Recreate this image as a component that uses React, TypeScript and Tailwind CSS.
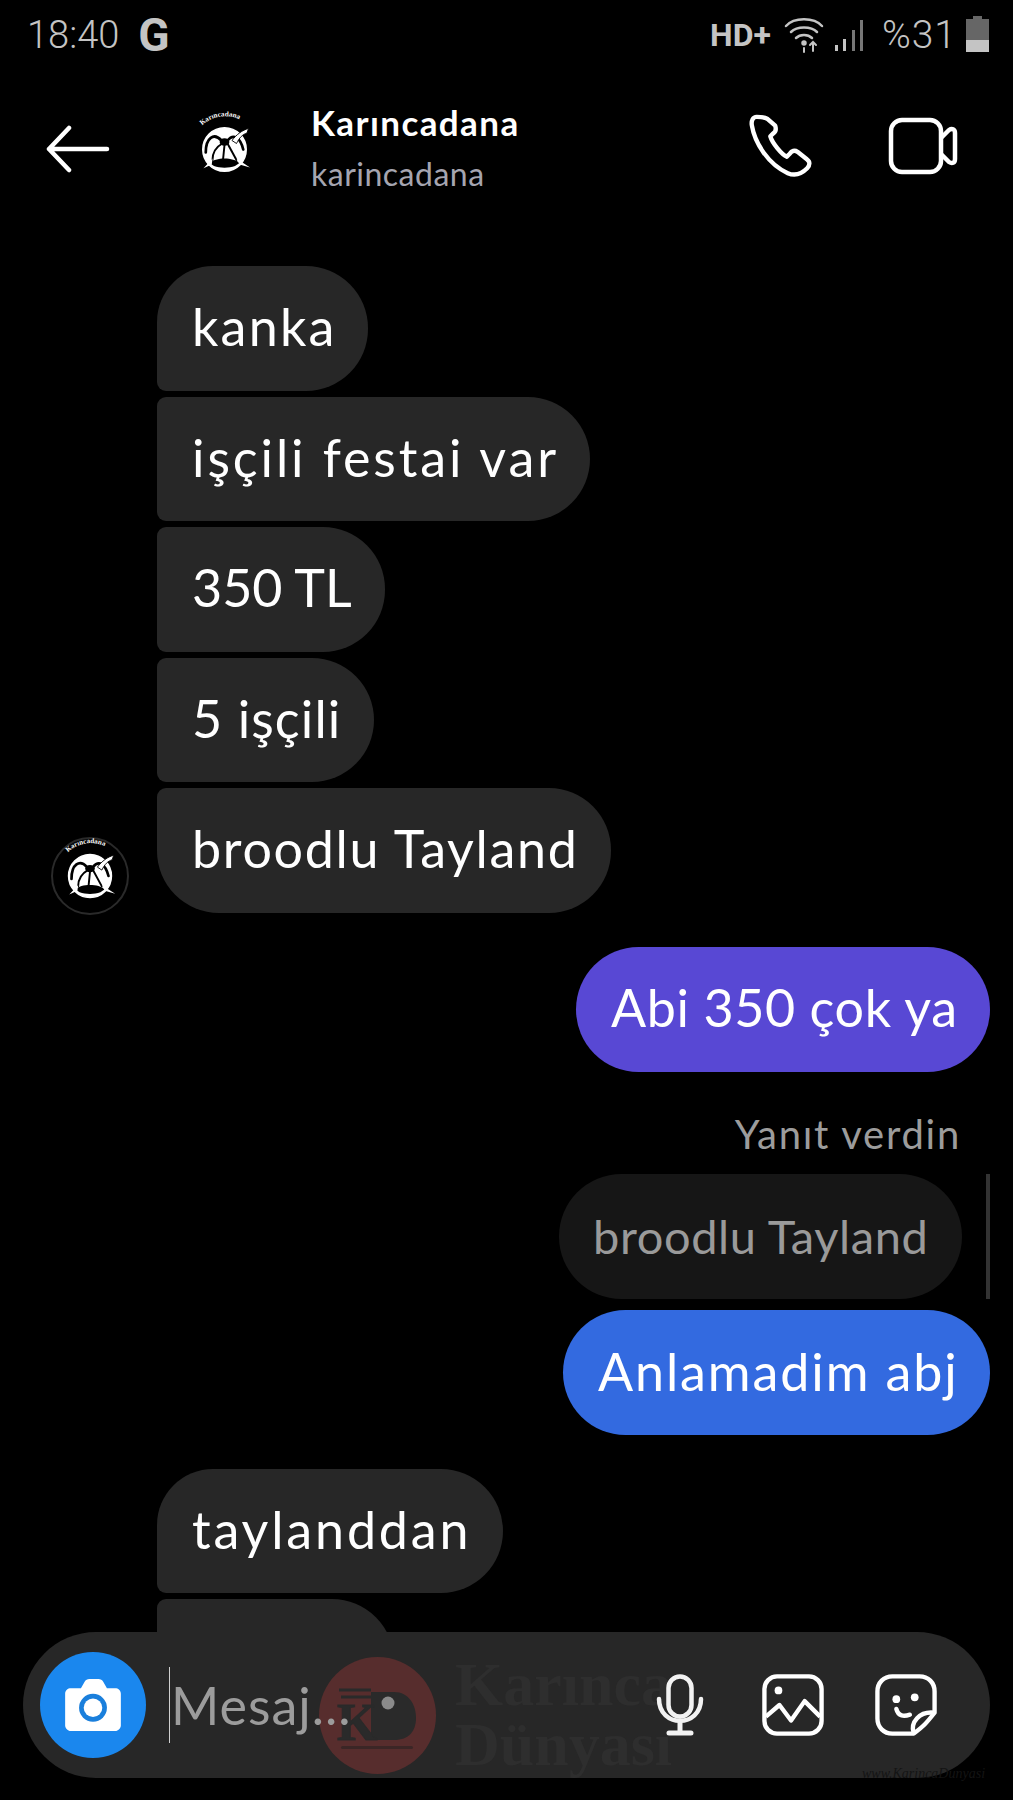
const hand = "font-['Lato','Noto_Sans',sans-serif]";

function Logo({ size, id }: { size: number; id: string }) {
  return (
    <svg width={size} height={size} viewBox="-4 10 100 100" className="overflow-visible shrink-0">
      <path id={id} d="M14 30 A45 45 0 0 1 80 30" fill="none" />
      <text fontSize="9.5" fill="#fff" fontFamily="Liberation Serif, serif" fontWeight="700">
        <textPath href={`#${id}`} startOffset="4%">Karıncadana</textPath>
      </text>
      <circle cx="46" cy="60" r="29" fill="#fff" stroke="#fff" strokeWidth="2" />
      {/* ground */}
      <path d="M26 78 C34 70 58 70 66 78 L60 82 C52 85 40 85 32 82Z" fill="#000" />
      {/* ant */}
      <g fill="none" stroke="#000" strokeWidth="3.6" strokeLinecap="round">
        <path d="M42 48 C32 37 21 44 21 64" />
        <path d="M50 48 C58 38 67 44 71 60" />
        <path d="M43 52 C36 56 30 62 30 74" strokeWidth="2.6" />
        <path d="M46 54 L44 74" strokeWidth="2.6" />
        <path d="M50 52 L62 74" strokeWidth="2.6" />
      </g>
      <ellipse cx="46" cy="50" rx="6.5" ry="5" fill="#000" />
      <path d="M56 48 C62 40 70 34 78 32 L76 38 C70 40 66 44 62 52Z" fill="#fff" stroke="#000" strokeWidth="1.2" />
      <path d="M62 72 L80 84 L66 80Z M30 72 L18 85 L29 80Z" fill="#fff" />
    </svg>
  );
}

function BackArrow() {
  return (
    <svg width="66" height="48" viewBox="0 0 66 48" fill="none" stroke="#fff" strokeWidth="4.5" strokeLinecap="round" strokeLinejoin="round">
      <path d="M62 24 H4 M24 3 L4 24 L24 45" />
    </svg>
  );
}

function PhoneIcon() {
  return (
    <svg width="64" height="64" viewBox="0 0 66 66" fill="none" stroke="#fff" strokeWidth="4.5" strokeLinejoin="round">
      <path d="M8 3 C4 3 2 7 3 12 C6 30 20 52 40 61 C47 64 54 62 60 56 C63 53 63 49 60 47 L50 39 C47 37 44 38 42 41 L39 44 C34 42 24 30 22 23 L25 20 C28 18 28 15 27 12 L19 5 C16 3 12 3 8 3Z" />
    </svg>
  );
}

function VideoIcon() {
  return (
    <svg width="70" height="58" viewBox="0 0 70 58" fill="none" stroke="#fff" strokeWidth="4.5" strokeLinejoin="round">
      <rect x="3" y="3" width="50" height="52" rx="11" />
      <path d="M53 21 L61 13 C64 11 67 12 67 16 V42 C67 46 64 47 61 45 L53 37" />
    </svg>
  );
}

function StatusIcons() {
  return (
    <div className="flex items-center">
      <span className="font-['Roboto',sans-serif] font-bold text-[32px] text-[#c4c4c4] leading-none mr-[13px]">HD+</span>
      <svg width="44" height="36" viewBox="0 0 44 36" fill="none" stroke="#c4c4c4" strokeWidth="2.5" strokeLinecap="round">
        <path d="M2 9 C10 0 30 0 38 9" />
        <path d="M7 15 C13 9 27 9 33 15" />
        <path d="M12 21 C16 17 24 17 28 21" />
        <circle cx="20" cy="26" r="1.5" fill="#c4c4c4" />
        <path d="M20 31 V35 M29 25 V34 M26 28 L29 25 L32 28" strokeWidth="2" />
      </svg>
      <svg width="30" height="36" viewBox="0 0 30 36" className="ml-[6px]" fill="#c4c4c4">
        <rect x="1" y="28" width="3" height="6" />
        <rect x="9" y="22" width="3" height="12" />
        <rect x="18" y="13" width="3" height="21" fill="#777" />
        <rect x="26" y="3" width="3" height="31" fill="#777" />
      </svg>
      <span className="font-['Roboto',sans-serif] font-light text-[39px] text-[#c4c4c4] leading-none ml-[18px] tracking-[1px]">%31</span>
      <svg width="25" height="38" viewBox="0 0 25 38" className="ml-[8px]">
        <rect x="8" y="0" width="9" height="4" fill="#666" />
        <rect x="1" y="3" width="23" height="21" fill="#666" />
        <rect x="1" y="24" width="23" height="12" fill="#c4c4c4" />
      </svg>
    </div>
  );
}

function LeftBubble({ text, width, shape }: { text: string; width: string; shape: string }) {
  return (
    <div className={`h-[124.5px] bg-[#272727] flex items-center pl-[35px] pb-[4px] rounded-r-[62px] text-white text-[52px] whitespace-nowrap ${hand} ${width} ${shape}`}>
      {text}
    </div>
  );
}

function CameraIcon() {
  return (
    <svg width="56" height="52" viewBox="0 0 60 56">
      <path d="M6 10 H17 L21 3 C22 1 24 0 26 0 H36 C38 0 40 1 41 3 L45 10 H54 C57 10 60 12 60 16 V50 C60 53 57 56 54 56 H6 C3 56 0 53 0 50 V16 C0 12 3 10 6 10Z" fill="#fff" />
      <circle cx="30" cy="31" r="15" fill="#1a7fdc" />
      <circle cx="30" cy="31" r="10" fill="#fff" />
    </svg>
  );
}

function MicIcon() {
  return (
    <svg width="48" height="62" viewBox="0 0 48 62" fill="none" stroke="#f2f2f2" strokeWidth="4.5" strokeLinecap="round">
      <rect x="12.5" y="2.5" width="23" height="40" rx="11.5" />
      <path d="M3 25 C3 54 45 54 45 25" />
      <path d="M24 47 V58 M13 59 H35" strokeWidth="5" />
    </svg>
  );
}

function ImageIcon() {
  return (
    <svg width="62" height="62" viewBox="0 0 64 64" fill="none" stroke="#fff" strokeWidth="4.5" strokeLinejoin="round">
      <rect x="2.5" y="2.5" width="59" height="59" rx="13" />
      <circle cx="17" cy="17" r="4" fill="#fff" stroke="none" />
      <path d="M4 44 L18 32 L30 48 L44 28 L60 44" />
    </svg>
  );
}

function StickerIcon() {
  return (
    <svg width="62" height="62" viewBox="0 0 64 64" fill="none" stroke="#fff" strokeWidth="4.5" strokeLinejoin="round">
      <path d="M40 61.5 H18 C9 61.5 2.5 55 2.5 46 V18 C2.5 9 9 2.5 18 2.5 H46 C55 2.5 61.5 9 61.5 18 V40 C52 52 50 54 40 61.5Z" />
      <path d="M40 61.5 C36 50 46 38 61.5 40" />
      <path d="M22 36 C24 44 30 44 36 42" strokeLinecap="round" />
      <circle cx="22" cy="26" r="4" fill="#fff" stroke="none" />
      <circle cx="41" cy="24" r="4" fill="#fff" stroke="none" />
    </svg>
  );
}

function WatermarkLogo() {
  return (
    <svg width="117" height="117" viewBox="0 0 117 117">
      <circle cx="58.5" cy="58.5" r="58.5" fill="#572d2d" />
      <path d="M52 35 H75 C90 35 97 48 97 61 C97 74 90 83 75 83 H52Z" fill="#2a2a2a" />
      <text x="18" y="83" fontSize="52" fontWeight="700" fill="#2a2a2a" stroke="#2a2a2a" strokeWidth="1" fontFamily="Liberation Serif, serif">K</text>
      <path d="M20 33 H52 M22 40 H52" stroke="#2a2a2a" strokeWidth="3" />
      <circle cx="69" cy="46" r="6.5" fill="#8a8a8a" />
      <rect x="22" y="89" width="72" height="3" rx="1.5" fill="#3b2626" />
    </svg>
  );
}

export default function App() {
  return (
    <div className="relative h-[1800px] bg-black overflow-hidden">
      {/* status bar */}
      <div className="h-[70px] flex items-center justify-between pl-[27px] pr-[23px]">
        <div className="flex items-center gap-[19px]">
          <span className="font-['Roboto',sans-serif] font-light text-[38px] leading-none text-[#c4c4c4]">18:40</span>
          <span className="font-['Roboto',sans-serif] font-bold text-[46px] leading-none text-[#c4c4c4]">G</span>
        </div>
        <StatusIcons />
      </div>

      {/* header */}
      <div className="h-[165px] flex items-center pl-[45px] pr-[55px] pb-[7px] text-white">
        <BackArrow />
        <div className="ml-[76px]">
          <Logo size={75} id="logoHeader" />
        </div>
        <div className={`ml-[49px] flex-1 -mt-[2px] ${hand}`}>
          <div className="text-[35px] font-bold leading-[42px] tracking-[1.4px]">Karıncadana</div>
          <div className="text-[32px] leading-[42px] text-[#a5a5b0] mt-[10px] tracking-[.5px]">karincadana</div>
        </div>
        <div className="-mt-[6px]">
          <PhoneIcon />
        </div>
        <div className="ml-[75px] -mt-[6px]">
          <VideoIcon />
        </div>
      </div>

      {/* messages */}
      <div className="pt-[31px] flex flex-col">
        <div className="flex flex-col gap-[6px]">
          <div className="pl-[157px]">
            <LeftBubble text="kanka" width="w-[211px] tracking-[2.2px]" shape="rounded-tl-[56px] rounded-bl-[9px]" />
          </div>
          <div className="pl-[157px]">
            <LeftBubble text="işçili festai var" width="w-[433px] tracking-[2.9px]" shape="rounded-l-[9px]" />
          </div>
          <div className="pl-[157px]">
            <LeftBubble text="350 TL" width="w-[228px] tracking-[0px]" shape="rounded-l-[9px]" />
          </div>
          <div className="pl-[157px]">
            <LeftBubble text="5 işçili" width="w-[217px] tracking-[1.1px]" shape="rounded-l-[9px]" />
          </div>
          <div className="pl-[51px] flex items-end gap-[28px]">
            <div className="w-[78px] h-[78px] rounded-full border-2 border-[#2a2a2a] flex items-center justify-center -mb-[2px]">
              <Logo size={74} id="logoAvatar" />
            </div>
            <LeftBubble text="broodlu Tayland" width="w-[454px] tracking-[1.7px]" shape="rounded-tl-[9px] rounded-bl-[62px]" />
          </div>
        </div>

        <div className="mt-[34px] pr-[23px] flex justify-end">
          <div className={`h-[125px] w-[414px] rounded-full bg-[#5848d4] flex items-center pl-[35px] pb-[4px] text-white text-[52px] tracking-[.6px] whitespace-nowrap ${hand}`}>
            Abi 350 çok ya
          </div>
        </div>

        <div className={`mt-[39px] h-[47px] pr-[52px] text-right text-[40px] leading-[47px] tracking-[1.75px] text-[#9c9c9c] ${hand}`}>
          Yanıt verdin
        </div>

        <div className="mt-[16px] pr-[23px] flex justify-end">
          <div className={`h-[125px] w-[403px] rounded-full bg-[#161616] flex items-center pl-[34px] text-[#9a9a9a] text-[47px] tracking-[.6px] whitespace-nowrap ${hand}`}>
            broodlu Tayland
          </div>
          <div className="w-[4px] ml-[24px] bg-[#333333]" />
        </div>

        <div className="mt-[11px] pr-[23px] flex justify-end">
          <div className={`h-[125px] w-[427px] rounded-full bg-[#336ae0] flex items-center pl-[35px] pb-[2px] text-white text-[52px] tracking-[1.9px] whitespace-nowrap ${hand}`}>
            Anlamadim abj
          </div>
        </div>

        <div className="mt-[34px] flex flex-col gap-[6px] pl-[157px]">
          <LeftBubble text="taylanddan" width="w-[346px] tracking-[2.85px]" shape="rounded-tl-[56px] rounded-bl-[9px]" />
          <div className="h-[124.5px] w-[237px] bg-[#272727] rounded-l-[9px] rounded-r-[62px]" />
        </div>
      </div>

      {/* message input, sits over the list */}
      <div className="absolute left-[23px] top-[1632px] w-[967px] h-[146px] rounded-full bg-[#272727] flex items-center pl-[17px] pr-[53px]">
        <div className="w-[106px] h-[106px] rounded-full bg-[#1a87ee] flex items-center justify-center shrink-0">
          <CameraIcon />
        </div>
        <div className="ml-[23px] w-px h-[76px] bg-[#cfcfcf]" />
        <div className={`relative z-10 ml-[1px] flex-1 text-[52px] tracking-[1px] text-[#9c9c9c] ${hand}`}>Mesaj...</div>
        <div className="relative z-10">
          <MicIcon />
        </div>
        <div className="ml-[58px]">
          <ImageIcon />
        </div>
        <div className="ml-[51px]">
          <StickerIcon />
        </div>
      </div>

      {/* watermark */}
      <div className="absolute left-[319px] top-[1657px]">
        <WatermarkLogo />
      </div>
      <div className="absolute left-[455px] top-[1654px] font-['Liberation_Serif',serif] font-bold text-[62px] leading-[60px] text-[#2e2e2e]">
        <div>Karınca</div>
        <div>Dünyası</div>
      </div>
      <div className="absolute left-[862px] top-[1763px] font-['Liberation_Serif',serif] italic text-[14px] text-[#141414] whitespace-nowrap">
        www.KarincaDunyasi
      </div>
    </div>
  );
}
